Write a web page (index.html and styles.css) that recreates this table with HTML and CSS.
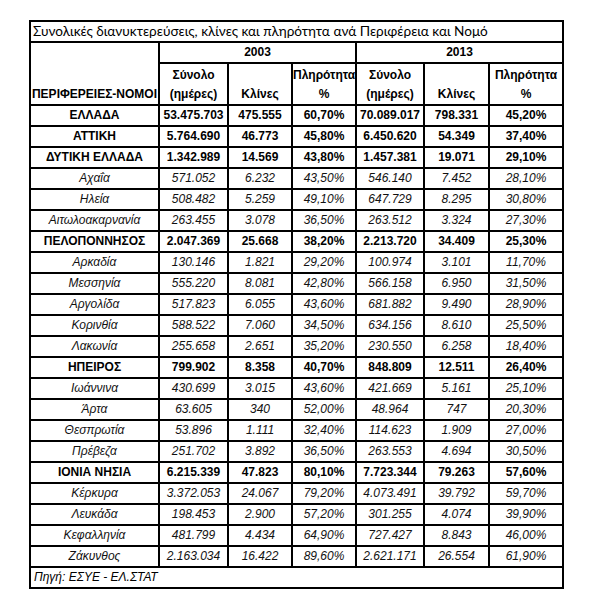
FILE: index.html
```html
<!DOCTYPE html>
<html lang="el">
<head>
<meta charset="utf-8">
<title>Διανυκτερεύσεις</title>
<link rel="stylesheet" href="styles.css">
</head>
<body>
<div class="page">
<table class="stats">
<colgroup>
<col class="c-name"><col class="c-sum"><col class="c-beds"><col class="c-pct"><col class="c-sum2"><col class="c-beds2"><col class="c-pct2">
</colgroup>
<tbody>
<tr><td class="title" colspan="7">Συνολικές διανυκτερεύσεις, κλίνες και πληρότητα ανά Περιφέρεια και Νομό</td></tr>
<tr class="year"><td class="head-name" rowspan="2">ΠΕΡΙΦΕΡΕΙΕΣ-ΝΟΜΟΙ</td><td colspan="3">2003</td><td colspan="3">2013</td></tr>
<tr class="head"><td>Σύνολο<br>(ημέρες)</td><td>Κλίνες</td><td>Πληρότητα<br>%</td><td>Σύνολο<br>(ημέρες)</td><td>Κλίνες</td><td>Πληρότητα<br>%</td></tr>
<tr class="region"><td>ΕΛΛΑΔΑ</td><td>53.475.703</td><td>475.555</td><td>60,70%</td><td>70.089.017</td><td>798.331</td><td>45,20%</td></tr>
<tr class="region"><td>ΑΤΤΙΚΗ</td><td>5.764.690</td><td>46.773</td><td>45,80%</td><td>6.450.620</td><td>54.349</td><td>37,40%</td></tr>
<tr class="region"><td>ΔΥΤΙΚΗ ΕΛΛΑΔΑ</td><td>1.342.989</td><td>14.569</td><td>43,80%</td><td>1.457.381</td><td>19.071</td><td>29,10%</td></tr>
<tr class="pref"><td>Αχαΐα</td><td>571.052</td><td>6.232</td><td>43,50%</td><td>546.140</td><td>7.452</td><td>28,10%</td></tr>
<tr class="pref"><td>Ηλεία</td><td>508.482</td><td>5.259</td><td>49,10%</td><td>647.729</td><td>8.295</td><td>30,80%</td></tr>
<tr class="pref"><td>Αιτωλοακαρνανία</td><td>263.455</td><td>3.078</td><td>36,50%</td><td>263.512</td><td>3.324</td><td>27,30%</td></tr>
<tr class="region"><td>ΠΕΛΟΠΟΝΝΗΣΟΣ</td><td>2.047.369</td><td>25.668</td><td>38,20%</td><td>2.213.720</td><td>34.409</td><td>25,30%</td></tr>
<tr class="pref"><td>Αρκαδία</td><td>130.146</td><td>1.821</td><td>29,20%</td><td>100.974</td><td>3.101</td><td>11,70%</td></tr>
<tr class="pref"><td>Μεσσηνία</td><td>555.220</td><td>8.081</td><td>42,80%</td><td>566.158</td><td>6.950</td><td>31,50%</td></tr>
<tr class="pref"><td>Αργολίδα</td><td>517.823</td><td>6.055</td><td>43,60%</td><td>681.882</td><td>9.490</td><td>28,90%</td></tr>
<tr class="pref"><td>Κορινθία</td><td>588.522</td><td>7.060</td><td>34,50%</td><td>634.156</td><td>8.610</td><td>25,50%</td></tr>
<tr class="pref"><td>Λακωνία</td><td>255.658</td><td>2.651</td><td>35,20%</td><td>230.550</td><td>6.258</td><td>18,40%</td></tr>
<tr class="region"><td>ΗΠΕΙΡΟΣ</td><td>799.902</td><td>8.358</td><td>40,70%</td><td>848.809</td><td>12.511</td><td>26,40%</td></tr>
<tr class="pref"><td>Ιωάννινα</td><td>430.699</td><td>3.015</td><td>43,60%</td><td>421.669</td><td>5.161</td><td>25,10%</td></tr>
<tr class="pref"><td>Άρτα</td><td>63.605</td><td>340</td><td>52,00%</td><td>48.964</td><td>747</td><td>20,30%</td></tr>
<tr class="pref"><td>Θεσπρωτία</td><td>53.896</td><td>1.111</td><td>32,40%</td><td>114.623</td><td>1.909</td><td>27,00%</td></tr>
<tr class="pref"><td>Πρέβεζα</td><td>251.702</td><td>3.892</td><td>36,50%</td><td>263.553</td><td>4.694</td><td>30,50%</td></tr>
<tr class="region"><td>ΙΟΝΙΑ ΝΗΣΙΑ</td><td>6.215.339</td><td>47.823</td><td>80,10%</td><td>7.723.344</td><td>79.263</td><td>57,60%</td></tr>
<tr class="pref"><td>Κέρκυρα</td><td>3.372.053</td><td>24.067</td><td>79,20%</td><td>4.073.491</td><td>39.792</td><td>59,70%</td></tr>
<tr class="pref"><td>Λευκάδα</td><td>198.453</td><td>2.900</td><td>57,20%</td><td>301.255</td><td>4.074</td><td>39,90%</td></tr>
<tr class="pref"><td>Κεφαλληνία</td><td>481.799</td><td>4.434</td><td>64,90%</td><td>727.427</td><td>8.843</td><td>46,00%</td></tr>
<tr class="pref"><td>Ζάκυνθος</td><td>2.163.034</td><td>16.422</td><td>89,60%</td><td>2.621.171</td><td>26.554</td><td>61,90%</td></tr>
<tr><td class="source" colspan="7">Πηγή: ΕΣΥΕ - ΕΛ.ΣΤΑΤ</td></tr>
</tbody>
</table>
</div>
</body>
</html>
```
FILE: styles.css
```css
html, body {
  margin: 0;
  padding: 0;
  background: #ffffff;
}

.page {
  padding: 20px 0 0 29px;
}

.stats {
  border-collapse: collapse;
  table-layout: fixed;
  width: 535px;
  font-family: "Liberation Sans", Arial, sans-serif;
  font-size: 12px;
  color: #000;
}

.c-name { width: 129px; }
.c-sum { width: 69px; }
.c-beds { width: 64px; }
.c-pct { width: 64px; }
.c-sum2 { width: 68px; }
.c-beds2 { width: 65px; }
.c-pct2 { width: 74px; }

.stats td {
  border: 2px solid #000;
  padding: 0;
  height: 19px;
  line-height: 19px;
  text-align: center;
  white-space: nowrap;
  overflow: hidden;
}

.stats .title {
  text-align: left;
  padding-left: 2px;
  font-family: Lato, "Liberation Sans", sans-serif;
  font-size: 13.6px;
  color: #000;
}

.year td {
  font-weight: bold;
}

.stats .head-name {
  vertical-align: bottom;
  font-weight: bold;
}

.head td {
  height: 40px;
  vertical-align: bottom;
  font-weight: bold;
}

.region td {
  font-weight: bold;
}

.pref td {
  font-style: italic;
  color: #111;
}

.stats .source {
  text-align: left;
  padding-left: 3px;
  font-style: italic;
}
```
